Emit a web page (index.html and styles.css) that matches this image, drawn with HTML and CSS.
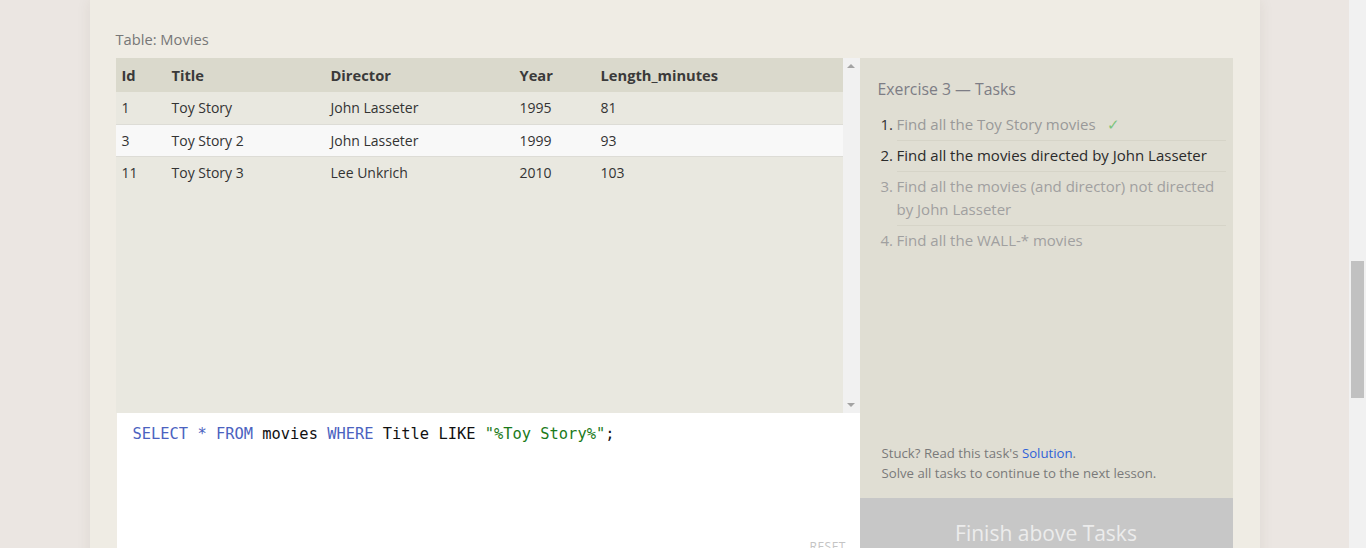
FILE: index.html
```html
<!DOCTYPE html>
<html>
<head>
<meta charset="utf-8">
<link rel="stylesheet" href="styles.css">
</head>
<body>
<div class="page">
  <div class="card">
    <div class="caption">Table: Movies</div>
    <div class="workspace">
      <div class="left">
        <div class="table-wrap">
          <div class="table-area">
            <table class="data">
              <thead>
                <tr><th class="c-id">Id</th><th class="c-title">Title</th><th class="c-dir">Director</th><th class="c-year">Year</th><th>Length_minutes</th></tr>
              </thead>
              <tbody>
                <tr><td class="num">1</td><td>Toy Story</td><td>John Lasseter</td><td>1995</td><td>81</td></tr>
                <tr class="hl"><td class="num">3</td><td>Toy Story 2</td><td>John Lasseter</td><td>1999</td><td>93</td></tr>
                <tr><td class="num">11</td><td>Toy Story 3</td><td>Lee Unkrich</td><td>2010</td><td>103</td></tr>
              </tbody>
            </table>
          </div>
          <div class="vscroll">
            <span class="arrow up"></span>
            <span class="arrow down"></span>
          </div>
        </div>
        <div class="editor">
          <div class="code"><span class="kw">SELECT</span> <span class="kw">*</span> <span class="kw">FROM</span> movies <span class="kw">WHERE</span> Title LIKE <span class="str">"%Toy Story%"</span>;</div>
          <div class="reset">RESET</div>
        </div>
      </div>
      <div class="right">
        <div class="tasks">
          <div class="tasks-title">Exercise 3 — Tasks</div>
          <ol class="task-list">
            <li class="done"><span class="n">1.</span><span class="t">Find all the Toy Story movies <span class="check">✓</span></span></li>
            <li class="current"><span class="n">2.</span><span class="t">Find all the movies directed by John Lasseter</span></li>
            <li class="todo"><span class="n">3.</span><span class="t">Find all the movies (and director) not directed by John Lasseter</span></li>
            <li class="todo last"><span class="n">4.</span><span class="t">Find all the WALL-* movies</span></li>
          </ol>
          <div class="help">
            <div>Stuck? Read this task's <a class="link">Solution</a>.</div>
            <div>Solve all tasks to continue to the next lesson.</div>
          </div>
        </div>
        <div class="finish">Finish above Tasks</div>
      </div>
    </div>
  </div>
</div>
<div class="page-scroll"><div class="thumb"></div></div>
</body>
</html>
```

FILE: styles.css
```css
html, body {
  margin: 0;
  padding: 0;
  height: 548px;
  overflow: hidden;
}
body {
  display: flex;
  background: #ebe6e2;
  font-family: "Open Sans", "Noto Sans", sans-serif;
  color: #333;
}
.page {
  flex: 1;
  display: flex;
  justify-content: center;
  height: 548px;
  overflow: hidden;
}
.card {
  width: 1170px;
  box-sizing: border-box;
  background: #efece4;
  box-shadow: 0 0 14px rgba(80, 60, 40, 0.08);
  padding: 27px 27px 0 26px;
  height: 620px;
}
.caption {
  font-size: 14.7px;
  color: #777;
  height: 31px;
  line-height: 24px;
}
.workspace {
  display: flex;
}
.left {
  width: 744px;
  display: flex;
  flex-direction: column;
}
.table-wrap {
  display: flex;
  height: 355px;
  background: #e9e8e0;
}
.table-area {
  flex: 1;
}
table.data {
  width: 100%;
  border-collapse: collapse;
  font-size: 14px;
}
table.data th {
  background: #dad9cc;
  text-align: left;
  font-weight: 700;
  font-size: 14.7px;
  color: #3a3a3a;
  height: 34px;
  padding: 0 6px;
}
table.data td {
  height: 31.5px;
  padding: 0 6px;
  color: #333;
  border-bottom: 1px solid #dddcd6;
}
table.data tr.hl td {
  background: #f8f8f8;
}
table.data tbody tr:last-child td {
  border-bottom: none;
}
.c-id { width: 38px; }
.c-title { width: 147px; }
.c-dir { width: 177px; }
.c-year { width: 69px; }
td.num { color: #2a5f9e; }
.vscroll {
  width: 17px;
  background: #f1f1f1;
  display: flex;
  flex-direction: column;
  justify-content: space-between;
  align-items: center;
  padding: 6px 0 6px;
  box-sizing: border-box;
}
.arrow {
  width: 0;
  height: 0;
  border-left: 4px solid transparent;
  border-right: 4px solid transparent;
}
.arrow.up { border-bottom: 4px solid #a3a3a3; }
.arrow.down { border-top: 4px solid #a3a3a3; }
.editor {
  background: #fff;
  margin-left: 1px;
  height: 200px;
  padding: 10px 16px 0 16px;
  box-sizing: border-box;
  position: relative;
}
.code {
  font-family: "DejaVu Sans Mono", "Liberation Mono", monospace;
  font-size: 15.4px;
  line-height: 22px;
  color: #111;
}
.kw { color: #4b62c0; }
.str { color: #1a7a1a; }
.reset {
  position: absolute;
  left: 693px;
  top: 125px;
  font-size: 12px;
  color: #c4c4c4;
  letter-spacing: 0.5px;
}
.right {
  width: 373px;
  display: flex;
  flex-direction: column;
}
.tasks {
  background: #e0ded3;
  height: 440px;
  box-sizing: border-box;
  padding: 20px 7px 0 18px;
  display: flex;
  flex-direction: column;
}
.tasks-title {
  font-size: 15.8px;
  color: #7d7d85;
  line-height: 22px;
  margin-bottom: 10px;
}
.task-list {
  list-style: none;
  margin: 0;
  padding: 0 0 0 3px;
  font-size: 15px;
  line-height: 23px;
}
.task-list li {
  display: flex;
}
.task-list .n {
  width: 16px;
  flex: none;
}
.task-list .t {
  flex: 1;
  padding: 3px 0 4px;
  border-bottom: 1px solid #d6d4c8;
}
.task-list li .n { padding-top: 3px; }
.task-list li.last .t { border-bottom: none; }
.done .n { color: #333; }
.done .t { color: #999; }
.check { color: #7cc47c; margin-left: 8px; }
.current .n, .current .t { color: #2b2b2b; }
.todo .n, .todo .t { color: #a0a0a0; }
.help {
  margin-top: auto;
  padding: 0 0 15px 4px;
  font-size: 13.2px;
  line-height: 20px;
  color: #7a7a7a;
}
.link { color: #2f62d8; }
.finish {
  background: #c7c7c7;
  color: #ececec;
  font-size: 21px;
  text-align: center;
  height: 80px;
  line-height: 70px;
}
.page-scroll {
  width: 17px;
  height: 548px;
  background: #f1f1f1;
  display: flex;
  flex-direction: column;
  align-items: center;
  padding-top: 261px;
  box-sizing: border-box;
}
.thumb {
  width: 13px;
  height: 137px;
  background: #c1c1c1;
}
```
